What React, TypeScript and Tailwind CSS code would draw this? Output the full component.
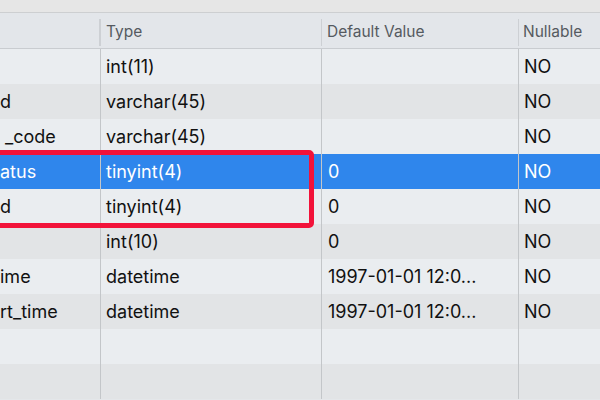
import React from 'react';

type Row = { name: string; namePad?: boolean; type: string; def: string; nullable: string };

const rows: Row[] = [
  { name: '', type: 'int(11)', def: '', nullable: 'NO' },
  { name: 'd', type: 'varchar(45)', def: '', nullable: 'NO' },
  { name: '_code', namePad: true, type: 'varchar(45)', def: '', nullable: 'NO' },
  { name: 'atus', type: 'tinyint(4)', def: '0', nullable: 'NO' },
  { name: 'd', type: 'tinyint(4)', def: '0', nullable: 'NO' },
  { name: '', type: 'int(10)', def: '0', nullable: 'NO' },
  { name: 'ime', type: 'datetime', def: '1997-01-01 12:0...', nullable: 'NO' },
  { name: 'rt_time', type: 'datetime', def: '1997-01-01 12:0...', nullable: 'NO' },
  { name: '', type: '', def: '', nullable: '' },
  { name: '', type: '', def: '', nullable: '' },
];

const App: React.FC = () => {
  return (
    <div
      className="relative w-[600px] h-[400px] overflow-hidden bg-[#e4e7ea]"
      style={{ fontFamily: 'Inter, "Noto Sans", sans-serif' }}
    >
      {/* window top strip */}
      <div className="h-[13px] bg-[#e6e6e6] border-b border-[#cdcfd1]" />

      {/* header */}
      <div className="flex h-[36px] items-center pt-[3px] bg-[#e3e6ea] border-b border-[#c9ccd0] text-[15.5px] text-[#555a60]">
        <div className="w-[99px]" />
        <div className="w-[2px] h-[27px] bg-[#cdd0d4]" />
        <div className="w-[220px] pl-[5px]">Type</div>
        <div className="w-[1px] h-[27px] bg-[#cdd0d4]" />
        <div className="w-[196px] pl-[5px]">Default Value</div>
        <div className="w-[1px] h-[27px] bg-[#cdd0d4]" />
        <div className="flex-1 pl-[4px]">Nullable</div>
      </div>

      {/* body */}
      <div className="flex flex-col text-[18px]">
        {rows.map((r, i) => {
          const selected = i === 3;
          const bg = selected ? 'bg-[#2f86ec] text-white' : i % 2 === 0 ? 'bg-[#eaedf0] text-[#111111]' : 'bg-[#e2e4e6] text-[#111111]';
          return (
            <div key={i} className={`flex h-[35px] items-center ${bg}`}>
              <div className={`w-[100px] h-full flex items-center overflow-hidden whitespace-nowrap ${r.namePad ? 'pl-[5px]' : ''}`}>
                {r.name}
              </div>
              <div className="w-[1px] h-full bg-[#c3c6c9]" />
              <div className="w-[220px] h-full flex items-center pl-[5px]">{r.type}</div>
              <div className="w-[1px] h-full bg-[#c3c6c9]" />
              <div className="w-[196px] h-full flex items-center pl-[6px] whitespace-nowrap">{r.def}</div>
              <div className="w-[1px] h-full bg-[#c3c6c9]" />
              <div className="flex-1 h-full flex items-center pl-[5px]">{r.nullable}</div>
            </div>
          );
        })}
      </div>

      {/* highlight box */}
      <div className="absolute left-[-10px] top-[150px] w-[324px] h-[78px] border-[5px] border-[#f2133a] rounded-[5px]" />
    </div>
  );
};

export default App;
